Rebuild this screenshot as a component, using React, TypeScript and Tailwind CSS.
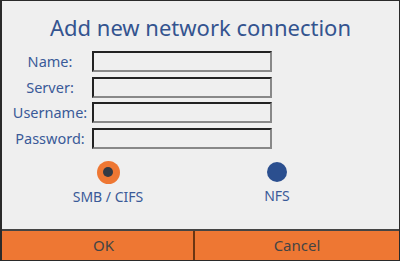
import React from "react";

const font = { fontFamily: '"Noto Sans", "Open Sans", sans-serif' };

function Row({ label }: { label: string }) {
  return (
    <div className="flex items-center h-[21px]">
      <div className="w-[84px] ml-[6px] text-center text-[14.5px] leading-none text-[#3a5a98]">{label}</div>
      <div className="w-[180px] h-[21px] border-2 border-t-[#222] border-l-[#222] border-b-[#888] border-r-[#888] bg-[#efefef]" />
    </div>
  );
}

export default function App() {
  return (
    <div style={font} className="w-[400px] h-[261px] bg-[#efefef] border border-[#2a2a2a] border-l-2 flex flex-col overflow-hidden">
      <div className="text-center text-[22px] leading-[28px] text-[#34548f] mt-[12px]">Add new network connection</div>
      <div className="flex flex-col gap-[4.5px] mt-[10px]">
        <Row label="Name:" />
        <Row label="Server:" />
        <Row label="Username:" />
        <Row label="Password:" />
      </div>
      <div className="flex mt-[12px]">
        <div className="w-[212px] flex flex-col items-center">
          <div className="w-[23px] h-[23px] rounded-full bg-[#ee7733] flex items-center justify-center">
            <div className="w-[10px] h-[10px] rounded-full bg-[#333a44]" />
          </div>
          <div className="text-[14px] leading-none mt-[6px] text-[#3a5a98] whitespace-pre">SMB / CIFS</div>
        </div>
        <div className="w-[126px] flex flex-col items-center">
          <div className="w-[20px] h-[20px] mt-[1px] rounded-full bg-[#2b4f8f]" />
          <div className="text-[14px] leading-none mt-[7px] text-[#3a5a98]">NFS</div>
        </div>
      </div>
      <div className="mt-auto flex h-[31px] border-t-2 border-[#444] bg-[#ee7733] text-[15px] text-[#444]">
        <div className="w-[191px] flex items-center justify-center pl-[12px]">OK</div>
        <div className="w-[2px] bg-[#6b3512]" />
        <div className="flex-1 flex items-center justify-center">Cancel</div>
      </div>
    </div>
  );
}
